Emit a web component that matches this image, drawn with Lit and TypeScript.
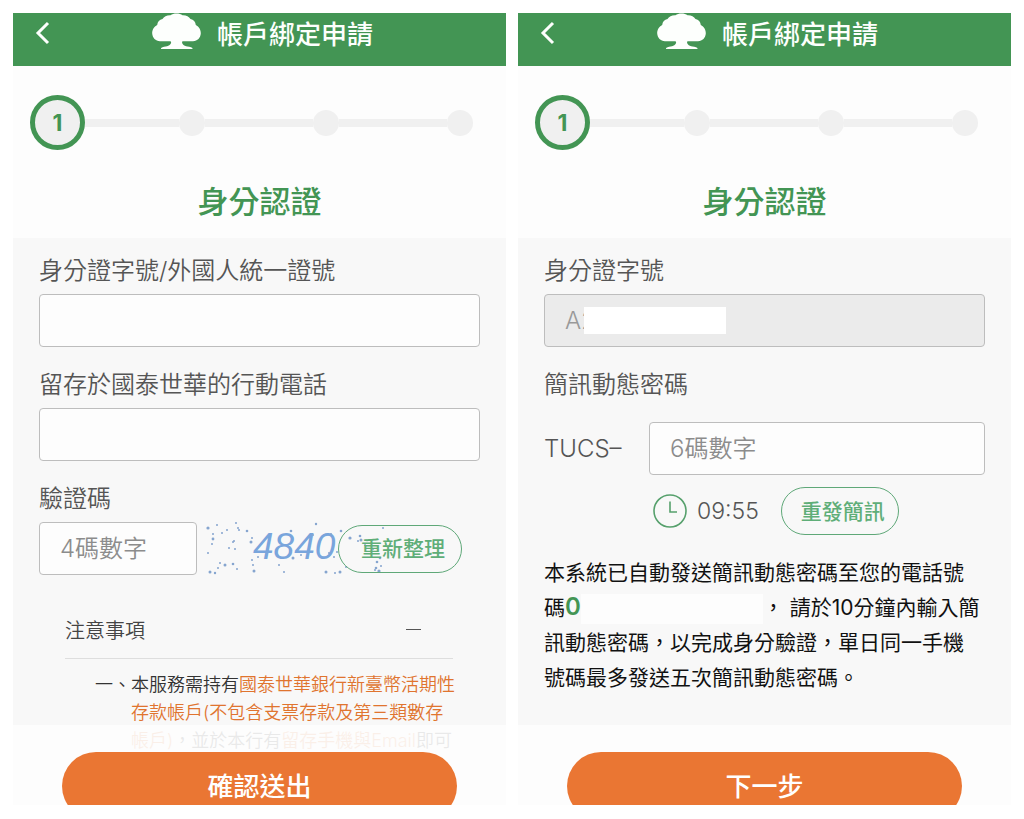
import { LitElement, html, svg, css } from "lit";
import { customElement, property } from "lit/decorators.js";

const base = css`
  *,
  *::before,
  *::after {
    box-sizing: border-box;
  }
  button,
  input {
    font: inherit;
    margin: 0;
  }
`;

/* Green title bar with the back link and the tree logo */
@customElement("bank-header")
class BankHeader extends LitElement {
  @property() heading = "";

  static styles = [
    base,
    css`
      :host {
        display: block;
        background: #439554;
        color: #fdfffd;
      }
      .bar {
        display: grid;
        grid-template-columns: 60px 1fr 54px;
        align-items: start;
        height: 53px;
      }
      .back {
        display: block;
        padding: 8px 0 0 22px;
        color: inherit;
      }
      .back svg,
      .tree {
        display: block;
      }
      .brand {
        display: flex;
        justify-content: center;
        gap: 16px;
      }
      .title {
        margin: 0;
        padding-top: 4px;
        font-size: 26px;
        line-height: 36px;
        font-weight: 500;
      }
    `,
  ];

  render() {
    return html`
      <header class="bar">
        <a class="back" href="#back" aria-label="返回">
          <svg width="15" height="24" viewBox="0 0 15 24" fill="none" stroke="currentColor" stroke-width="3">
            <path d="M13 2 3 12l10 10" />
          </svg>
        </a>
        <div class="brand">
          <svg class="tree" width="49" height="37" viewBox="0 0 49 37" fill="currentColor" aria-hidden="true">
            <path
              d="M24.500 0.500C27 0.500 29 1 30.500 2.200C34 2 37 3.500 38.500 6C41.500 6.500 43.500 9 43.800 12C47 13.500 49 17 48.800 20.500C48.500 25 45.500 28 41 28.200H31C29.800 28.200 30 29 30.200 30C30.600 32.500 34 33.300 39 34.200Q41 34.700 40.500 36H9Q8.500 34.700 10.500 34.200C15 33.300 18.600 32.500 19 30C19.200 29 19.400 28.200 18 28.200H8C3.500 28 0.500 25 0.200 20.500C0 17 2 13.500 5.200 12C5.500 9 7.500 6.500 10.500 6C12 3.500 15 2 18.500 2.200C20 1 22 0.500 24.500 0.500Z"
            />
          </svg>
          <h1 class="title">${this.heading}</h1>
        </div>
      </header>
    `;
  }
}

/* Four stage progress line, the current stage is ringed */
@customElement("step-line")
class StepLine extends LitElement {
  @property({ type: Number }) current = 1;
  @property({ type: Number }) total = 4;

  static styles = [
    base,
    css`
      :host {
        display: block;
      }
      .steps {
        display: flex;
        align-items: center;
        list-style: none;
        margin: 0;
        padding: 29px 33px 0 31px;
      }
      .step {
        display: flex;
        align-items: center;
        flex: 1;
      }
      .step:first-child {
        flex: none;
      }
      .line {
        flex: 1;
        height: 8px;
        background: #f0f0f0;
      }
      .dot {
        width: 26px;
        height: 26px;
        border-radius: 50%;
        background: #f0f0f0;
      }
      .ring {
        position: relative;
        display: grid;
        place-items: center;
        width: 55px;
        height: 55px;
        margin: 0 -14px;
        border: 5px solid #439554;
        border-radius: 50%;
        background: #f0f0f0;
        color: #439554;
        font-size: 23px;
        line-height: 28px;
        font-weight: 700;
      }
    `,
  ];

  render() {
    return html`
      <ol class="steps">
        ${Array.from({ length: this.total }, (_, i) => i + 1).map(
          (n) => html`
            <li class="step">
              ${n > 1 ? html`<span class="line"></span>` : ""}
              ${n === this.current ? html`<span class="ring">${n}</span>` : html`<span class="dot"></span>`}
            </li>
          `
        )}
      </ol>
    `;
  }
}

/* Speckles of the verification image: x, y, radius */
const SPECKS: [number, number, number][] = [
  [3, 6, 1.6], [12, 3, 1], [8, 12, 1], [8, 17, 1.4], [7, 22, 1], [3, 31, 1],
  [17, 11, 1], [22, 8, 1], [31, 1, 1], [33, 6, 1], [34, 8, 1], [42, 9, 1.3],
  [29, 19, 1], [28, 20, 1], [24, 26, 1], [30, 27, 1], [46, 20, 1.5], [47, 16, 1],
  [15, 41, 1], [20, 43, 1.5], [13, 46, 1], [28, 42, 1.3], [32, 47, 1], [5, 50, 1.5],
  [10, 51, 1.2], [47, 38, 1], [48, 43, 1], [49, 49, 1.5], [53, 35, 1], [79, 50, 1],
  [74, 43, 1], [111, 2, 1.2], [88, 36, 1.5], [96, 33, 1], [86, 9, 1.3], [108, 13, 1],
  [126, 12, 1], [124, 31, 1], [129, 35, 1], [136, 9, 1.3], [132, 30, 1], [141, 45, 1],
  [121, 50, 1.5], [130, 51, 1], [135, 50, 1.5], [145, 16, 1.6], [153, 19, 1], [155, 14, 1.3],
  [156, 18, 1.5], [178, 6, 1], [160, 23, 1], [168, 27, 1], [175, 36, 1.3], [172, 40, 1.3],
  [171, 46, 1.3], [176, 44, 1], [174, 49, 1.6], [170, 48, 1],
];

@customElement("verify-card")
class VerifyCard extends LitElement {
  @property() variant: "request" | "confirm" = "request";

  static styles = [
    base,
    css`
      :host {
        position: relative;
        display: flex;
        flex-direction: column;
        overflow: hidden;
        background: #fdfdfd;
      }
      .stage {
        margin: 0;
        padding: 34px 0 18px;
        font-size: 31px;
        line-height: 36px;
        font-weight: 500;
        text-align: center;
        color: #439554;
      }
      .form {
        flex: 1;
        padding: 17px 26px 0;
        background: #f8f8f8;
      }
      .label {
        display: block;
        margin-bottom: 7px;
        font-size: 24px;
        line-height: 32px;
        font-weight: 350;
        color: #555;
      }
      .box {
        display: block;
        width: 100%;
        min-width: 0;
        height: 53px;
        padding: 0 20px;
        border: 1px solid #bdbdbd;
        border-radius: 4px;
        background: #fdfdfd;
        font-size: 24px;
        font-weight: 350;
        color: #444;
      }
      .box::placeholder {
        color: #8c8c8c;
        opacity: 1;
      }
      .box:disabled {
        background: #ebebeb;
        color: #999;
      }
      .field {
        position: relative;
        margin-bottom: 22px;
      }
      .cover {
        position: absolute;
        left: 40px;
        bottom: 13px;
        width: 142px;
        height: 27px;
        background: #fff;
      }
      .row {
        display: flex;
        align-items: center;
      }
      .code {
        flex: 0 0 158px;
      }
      .captcha {
        flex: none;
        margin-left: 8px;
        overflow: visible;
      }
      .digits {
        font-size: 37px;
        font-style: italic;
        font-family: "Liberation Sans", sans-serif;
        fill: #79a5dc;
      }
      .pill {
        flex: none;
        height: 48px;
        padding: 0 13px 3px 19px;
        border: 1px solid #5fa878;
        border-radius: 24px;
        background: none;
        font-size: 21px;
        font-weight: 500;
        color: #5fae78;
      }
      .refresh {
        padding: 0 16px 3px 22px;
        margin-left: -45px;
      }
      .notice {
        display: flex;
        align-items: center;
        justify-content: space-between;
        width: calc(100% - 53px);
        height: 56px;
        margin: 28px 27px 12px 26px;
        padding: 0 32px 2px 0;
        border: 0;
        border-bottom: 1px solid #dedede;
        background: none;
        font-size: 20px;
        font-weight: 350;
        color: #444;
      }
      .minus {
        width: 15px;
        height: 1px;
        background: #555;
      }
      .rules {
        list-style: none;
        margin: 0 20px 0 56px;
        padding: 0;
        font-size: 18px;
        line-height: 28px;
        font-weight: 350;
        color: #333;
      }
      .rule {
        display: grid;
        grid-template-columns: 36px 1fr;
      }
      .hot {
        color: #e0742f;
      }
      .prefix {
        flex: 0 0 105px;
        font-size: 24px;
        font-weight: 350;
        color: #555;
      }
      .prefixed {
        margin-top: 21px;
      }
      .timer {
        display: flex;
        align-items: center;
        margin: 12px 0 20px 109px;
      }
      .clock {
        margin-right: 10px;
      }
      .time {
        margin-right: 22px;
        font-size: 23px;
        font-weight: 350;
        color: #555;
      }
      .message {
        margin: 0;
        padding: 0 4px 80px 0;
        font-size: 21px;
        line-height: 35px;
        font-weight: 400;
        color: #111;
      }
      .phone {
        font-size: 24px;
        line-height: 30px;
        font-weight: 600;
        color: #439554;
      }
      .hidden-number {
        display: inline-block;
        width: 182px;
        height: 30px;
        vertical-align: middle;
        background: #fdfdfd;
      }
      .footer {
        position: absolute;
        inset: auto 0 0;
        height: 80px;
        padding: 27px 49px 0;
        overflow: hidden;
        background: rgba(253, 253, 253, 0.9);
      }
      .submit {
        display: block;
        width: 100%;
        height: 68px;
        padding: 0 0 4px;
        border: 0;
        border-radius: 34px;
        background: #ea7633;
        font-size: 26px;
        font-weight: 500;
        color: #fff;
      }
    `,
  ];

  private request() {
    return html`
      <div class="field">
        <label class="label" for="id">身分證字號/外國人統一證號</label>
        <input class="box" id="id" type="text" />
      </div>
      <div class="field">
        <label class="label" for="tel">留存於國泰世華的行動電話</label>
        <input class="box" id="tel" type="tel" />
      </div>
      <label class="label" for="code">驗證碼</label>
      <div class="row">
        <input class="box code" id="code" type="text" placeholder="4碼數字" />
        <svg class="captcha" width="178" height="53" viewBox="0 0 178 53" role="img" aria-label="4840">
          <text class="digits" x="48" y="37">4840</text>
          ${SPECKS.map(([x, y, r]) => svg`<circle cx=${x} cy=${y} r=${r} fill="#86a5cf" />`)}
        </svg>
        <button class="pill refresh" type="button">重新整理</button>
      </div>
      <button class="notice" type="button" aria-expanded="true">注意事項<span class="minus"></span></button>
      <ol class="rules">
        <li class="rule">
          <span>一、</span>
          <span
            >本服務需持有<span class="hot">國泰世華銀行新臺幣活期性存款帳戶(不包含支票存款及第三類數存帳戶)</span
            >，並於本行有<span class="hot">留存手機與Email</span>即可</span
          >
        </li>
      </ol>
    `;
  }

  private confirm() {
    return html`
      <div class="field">
        <label class="label" for="id">身分證字號</label>
        <input class="box" id="id" type="text" value="A2" disabled />
        <span class="cover"></span>
      </div>
      <label class="label" for="otp">簡訊動態密碼</label>
      <div class="row prefixed">
        <span class="prefix">TUCS–</span>
        <input class="box" id="otp" type="text" placeholder="6碼數字" />
      </div>
      <div class="timer">
        <svg class="clock" width="34" height="34" viewBox="0 0 34 34" fill="none" stroke="#56a06c" stroke-width="1.6" aria-hidden="true">
          <circle cx="17" cy="17" r="16" />
          <path d="M17 7.500V18h7" />
        </svg>
        <span class="time">09:55</span>
        <button class="pill" type="button">重發簡訊</button>
      </div>
      <p class="message">
        本系統已自動發送簡訊動態密碼至您的電話號碼<span class="phone">0</span><span class="hidden-number"></span>， 請於10分鐘內輸入簡訊動態密碼，以完成身分驗證，單日同一手機號碼最多發送五次簡訊動態密碼。
      </p>
    `;
  }

  render() {
    const first = this.variant === "request";
    return html`
      <bank-header heading="帳戶綁定申請"></bank-header>
      <step-line current="1" total="4"></step-line>
      <h2 class="stage">身分認證</h2>
      <form class="form">${first ? this.request() : this.confirm()}</form>
      <div class="footer">
        <button class="submit" type="button">${first ? "確認送出" : "下一步"}</button>
      </div>
    `;
  }
}

@customElement("app-root")
class AppRoot extends LitElement {
  static styles = [
    base,
    css`
      :host {
        display: block;
        font-family: Inter, "Noto Sans CJK TC", sans-serif;
        background: #fff;
      }
      .page {
        display: grid;
        grid-template-columns: repeat(auto-fit, minmax(440px, 1fr));
        gap: 12px;
        min-height: 100vh;
        padding: 13px 13px 14px;
      }
    `,
  ];

  render() {
    return html`
      <main class="page" lang="zh-Hant">
        <verify-card variant="request"></verify-card>
        <verify-card variant="confirm"></verify-card>
      </main>
    `;
  }
}
